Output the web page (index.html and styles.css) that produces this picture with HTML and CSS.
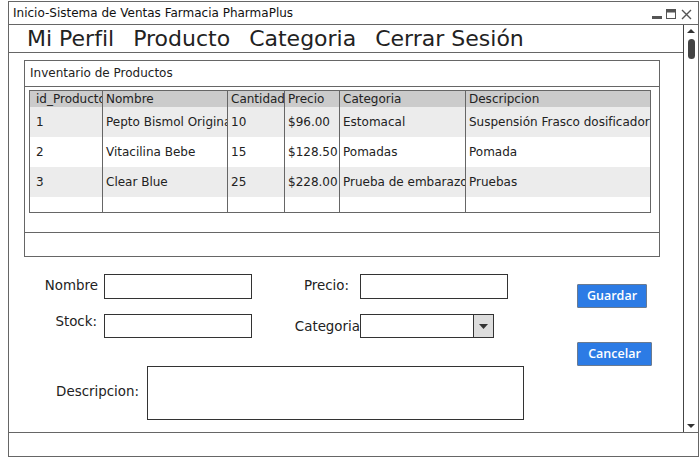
FILE: index.html
```html
<!DOCTYPE html>
<html lang="es">
<head>
<meta charset="utf-8">
<title>Inicio-Sistema de Ventas Farmacia PharmaPlus</title>
<link rel="stylesheet" href="styles.css">
</head>
<body>
<div class="window">
  <div class="titlebar">
    <span class="title">Inicio-Sistema de Ventas Farmacia PharmaPlus</span>
    <span class="controls">
      <svg width="40" height="11" viewBox="0 0 40 11">
        <rect x="0" y="7" width="10" height="3" fill="#555"/>
        <rect x="14.5" y="0.5" width="9" height="9" fill="none" stroke="#555"/>
        <rect x="14.5" y="0.5" width="9" height="3" fill="#555"/>
        <path d="M30 1 L39 10 M39 1 L30 10" stroke="#555" stroke-width="1.4"/>
      </svg>
    </span>
  </div>
  <div class="main">
    <div class="content">
      <nav class="menubar">
        <span class="menu-item">Mi Perfil</span>
        <span class="menu-item">Producto</span>
        <span class="menu-item">Categoria</span>
        <span class="menu-item">Cerrar Sesión</span>
      </nav>
      <section class="panel">
        <div class="panel-title">Inventario de Productos</div>
        <div class="table-wrap">
          <table class="grid">
            <colgroup>
              <col class="c1"><col class="c2"><col class="c3"><col class="c4"><col class="c5"><col class="c6">
            </colgroup>
            <thead>
              <tr><th class="first">id_Producto</th><th>Nombre</th><th>Cantidad</th><th>Precio</th><th>Categoria</th><th>Descripcion</th></tr>
            </thead>
            <tbody>
              <tr class="shade"><td class="first">1</td><td>Pepto Bismol Original</td><td>10</td><td>$96.00</td><td>Estomacal</td><td>Suspensión Frasco dosificador</td></tr>
              <tr><td class="first">2</td><td>Vitacilina Bebe</td><td>15</td><td>$128.50</td><td>Pomadas</td><td>Pomada</td></tr>
              <tr class="shade"><td class="first">3</td><td>Clear Blue</td><td>25</td><td>$228.00</td><td>Prueba de embarazo</td><td>Pruebas</td></tr>
              <tr class="empty"><td></td><td></td><td></td><td></td><td></td><td></td></tr>
            </tbody>
          </table>
        </div>
        <div class="panel-footer"></div>
      </section>
      <form class="form">
        <div class="fields">
          <div class="row r1">
            <label class="lbl l-nombre">Nombre</label>
            <div class="input"></div>
            <label class="lbl l-precio">Precio:</label>
            <div class="input"></div>
          </div>
          <div class="row r2">
            <label class="lbl l-stock">Stock:</label>
            <div class="input"></div>
            <label class="lbl l-cat">Categoria</label>
            <div class="select"><span class="select-btn"><svg width="9" height="5" viewBox="0 0 9 5"><path d="M0 0 H9 L4.5 5 Z" fill="#333"/></svg></span></div>
          </div>
          <div class="row r3">
            <label class="lbl l-desc">Descripcion:</label>
            <div class="textarea"></div>
          </div>
        </div>
        <div class="buttons">
          <button type="button" class="btn b-guardar">Guardar</button>
          <button type="button" class="btn b-cancelar">Cancelar</button>
        </div>
      </form>
    </div>
    <div class="scrollbar">
      <svg class="arrow-up" width="8" height="4" viewBox="0 0 8 4"><path d="M0 4 L4 0 L8 4 Z" fill="#333"/></svg>
      <div class="thumb"></div>
      <svg class="arrow-down" width="8" height="4" viewBox="0 0 8 4"><path d="M0 0 H8 L4 4 Z" fill="#333"/></svg>
    </div>
  </div>
  <div class="statusbar"></div>
</div>
</body>
</html>
```

FILE: styles.css
```css
* { box-sizing: border-box; }
html, body { margin: 0; padding: 0; background: #fff; }
body {
  font-family: "DejaVu Sans", "Open Sans", sans-serif;
  color: #222;
}
.window {
  margin: 1px 0 0 8px;
  width: 691px;
  height: 456px;
  border: 1px solid #666;
  display: flex;
  flex-direction: column;
  background: #fff;
}
.titlebar {
  height: 23px;
  flex: none;
  border-bottom: 1px solid #666;
  display: flex;
  align-items: center;
  justify-content: space-between;
  padding: 0 6px 0 4px;
}
.title { font-size: 12px; color: #111; }
.controls { display: flex; height: 11px; margin-top: 3px; }
.main {
  flex: 1;
  display: flex;
  min-height: 0;
}
.content { flex: 1; min-width: 0; }
.menubar {
  height: 28px;
  border-bottom: 1px solid #666;
  display: flex;
  align-items: center;
  gap: 19px;
  padding-left: 18px;
}
.menu-item { font-size: 22px; color: #222; line-height: 1; }
.panel {
  margin: 7px 0 0 15px;
  width: 636px;
  height: 197px;
  border: 1px solid #666;
  display: flex;
  flex-direction: column;
}
.panel-title {
  height: 26px;
  border-bottom: 1px solid #666;
  padding-left: 5px;
  font-size: 12px;
  line-height: 25px;
}
.table-wrap { padding: 3px 0 0 4px; }
.grid {
  border-collapse: collapse;
  table-layout: fixed;
  width: 621px;
  font-size: 12px;
  border: 1px solid #666;
}
.grid col.c1 { width: 73px; }
.grid col.c2 { width: 125px; }
.grid col.c3 { width: 57px; }
.grid col.c4 { width: 55px; }
.grid col.c5 { width: 126px; }
.grid col.c6 { width: 185px; }
.grid th, .grid td {
  border-left: 1px solid #666;
  border-right: 1px solid #666;
  padding: 0 0 0 3px;
  white-space: nowrap;
  overflow: hidden;
  text-align: left;
  font-weight: normal;
  color: #222;
}
.grid th.first, .grid td.first { padding-left: 6px; }
.grid thead th { height: 16px; line-height: 16px; background: #cbcbcb; }
.grid tbody td { height: 30px; line-height: 30px; }
.grid tr.shade td { background: #ececec; }
.grid tr.empty td { height: 15px; line-height: 15px; }
.panel-footer {
  margin-top: auto;
  height: 24px;
  border-top: 1px solid #666;
}
.form {
  display: flex;
  padding-top: 17px;
}
.fields { width: 568px; }
.row { display: flex; align-items: center; }
.r1 { height: 25px; }
.r2 { height: 24px; margin-top: 15px; }
.r3 { margin-top: 28px; align-items: center; }
.lbl {
  font-size: 13.4px;
  text-align: right;
  color: #222;
  white-space: nowrap;
}
.l-nombre { width: 89px; margin-right: 6px; margin-top: -2px; }
.l-precio { width: 97px; margin-right: 11px; margin-top: -2px; }
.l-stock { width: 88px; margin-right: 7px; margin-top: -10px; }
.l-cat { width: 108px; }
.l-desc { width: 130px; margin-right: 8px; margin-top: -4px; }
.input {
  width: 148px;
  height: 25px;
  border: 1px solid #333;
}
.r2 .input { height: 24px; }
.select {
  width: 134px;
  height: 24px;
  border: 1px solid #333;
  display: flex;
  justify-content: flex-end;
}
.select-btn {
  width: 20px;
  border-left: 1px solid #333;
  background: #ddd;
  display: flex;
  align-items: center;
  justify-content: center;
}
.textarea {
  width: 377px;
  height: 54px;
  border: 1px solid #333;
}
.buttons { display: flex; flex-direction: column; align-items: flex-start; }
.btn {
  font-family: "Open Sans", "DejaVu Sans", sans-serif;
  font-size: 12.5px;
  font-weight: 600;
  color: #fff;
  background: #2c7be5;
  border: 1px solid #6a7a90;
  border-radius: 1px;
  height: 24px;
  padding: 0;
  line-height: 20px;
}
.b-guardar { width: 70px; margin-top: 10px; }
.b-cancelar { width: 75px; margin-top: 34px; }
.scrollbar {
  width: 15px;
  flex: none;
  border-left: 1px solid #444;
  display: flex;
  flex-direction: column;
  align-items: center;
  padding: 4px 0 4px 0;
}
.thumb {
  width: 7px;
  height: 20px;
  border-radius: 4px;
  background: #444;
  margin-top: 6px;
}
.arrow-down { margin-top: auto; }
.statusbar {
  height: 24px;
  flex: none;
  border-top: 1px solid #666;
}
```
